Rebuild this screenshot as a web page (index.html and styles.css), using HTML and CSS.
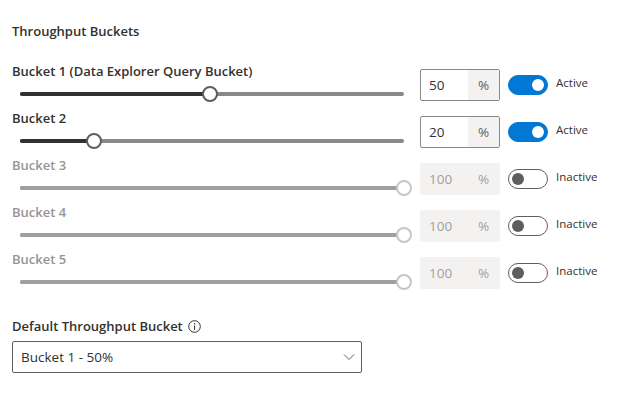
FILE: index.html
```html
<!DOCTYPE html>
<html>
<head>
<meta charset="utf-8">
<link rel="stylesheet" href="styles.css">
</head>
<body>
<div class="page">
  <div class="heading">Throughput Buckets</div>
  <div class="rows">
    <div class="row">
      <div class="left">
        <div class="label">Bucket 1 (Data Explorer Query Bucket)</div>
        <div class="slider" style="--v:50%"><div class="track"></div><div class="fill"></div><div class="thumb"></div></div>
      </div>
      <div class="field"><span class="value">50</span><span class="suffix">%</span></div>
      <div class="toggle on"><span class="knob"></span></div>
      <span class="tlabel">Active</span>
    </div>
    <div class="row">
      <div class="left">
        <div class="label">Bucket 2</div>
        <div class="slider" style="--v:20%"><div class="track"></div><div class="fill"></div><div class="thumb"></div></div>
      </div>
      <div class="field"><span class="value">20</span><span class="suffix">%</span></div>
      <div class="toggle on"><span class="knob"></span></div>
      <span class="tlabel">Active</span>
    </div>
    <div class="row disabled">
      <div class="left">
        <div class="label">Bucket 3</div>
        <div class="slider" style="--v:100%"><div class="track"></div><div class="fill"></div><div class="thumb"></div></div>
      </div>
      <div class="field"><span class="value">100</span><span class="suffix">%</span></div>
      <div class="toggle"><span class="knob"></span></div>
      <span class="tlabel">Inactive</span>
    </div>
    <div class="row disabled">
      <div class="left">
        <div class="label">Bucket 4</div>
        <div class="slider" style="--v:100%"><div class="track"></div><div class="fill"></div><div class="thumb"></div></div>
      </div>
      <div class="field"><span class="value">100</span><span class="suffix">%</span></div>
      <div class="toggle"><span class="knob"></span></div>
      <span class="tlabel">Inactive</span>
    </div>
    <div class="row disabled">
      <div class="left">
        <div class="label">Bucket 5</div>
        <div class="slider" style="--v:100%"><div class="track"></div><div class="fill"></div><div class="thumb"></div></div>
      </div>
      <div class="field"><span class="value">100</span><span class="suffix">%</span></div>
      <div class="toggle"><span class="knob"></span></div>
      <span class="tlabel">Inactive</span>
    </div>
  </div>
  <div class="default-label">Default Throughput Bucket
    <svg class="info" width="13" height="13" viewBox="0 0 13 13"><circle cx="6.5" cy="6.5" r="5.8" fill="none" stroke="#323130" stroke-width="1"/><line x1="6.5" y1="5.6" x2="6.5" y2="9.8" stroke="#323130" stroke-width="1.1"/><circle cx="6.5" cy="3.8" r="0.75" fill="#323130"/></svg>
  </div>
  <div class="dropdown">
    <span>Bucket 1 - 50%</span>
    <svg class="chev" width="12" height="8" viewBox="0 0 12 8"><polyline points="1,1.5 6,6.5 11,1.5" fill="none" stroke="#605e5c" stroke-width="1"/></svg>
  </div>
</div>
</body>
</html>
```

FILE: styles.css
```css
* { box-sizing: border-box; }
html, body { margin: 0; background: #ffffff; }
body {
  font-family: "Segoe UI", "Open Sans", "Noto Sans", sans-serif;
  color: #323130;
  font-size: 14px;
}
.page { padding: 21px 12px 0 12px; }
.heading {
  font-size: 13px;
  font-weight: 600;
  line-height: 20px;
  margin-bottom: 20px;
}
.row {
  display: grid;
  grid-template-columns: 408px 80px 48px 1fr;
  align-items: center;
  height: 47px;
}
.left { display: flex; flex-direction: column; align-self: start; }
.label {
  font-size: 13px;
  font-weight: 600;
  line-height: 20px;
  height: 20px;
  white-space: nowrap;
}
.slider {
  position: relative;
  width: 388px;
  height: 26px;
  margin-left: 4px;
}
.track, .fill {
  position: absolute;
  top: 11px;
  height: 4px;
  border-radius: 2px;
}
.track { left: 4px; right: 0; background: #8a8886; }
.fill { left: 4px; width: calc(var(--v) - 4px); background: #323130; }
.thumb {
  position: absolute;
  top: 5px;
  left: var(--v);
  width: 16px;
  height: 16px;
  margin-left: -8px;
  border-radius: 50%;
  background: #ffffff;
  border: 2px solid #605e5c;
}
.field {
  display: flex;
  height: 32px;
  border: 1px solid #8a8886;
  border-radius: 2px;
  overflow: hidden;
}
.value {
  flex: 1;
  padding-left: 8px;
  line-height: 30px;
  font-size: 13.5px;
}
.suffix {
  width: 31px;
  background: #f3f2f1;
  color: #605e5c;
  text-align: center;
  line-height: 30px;
  font-size: 13.5px;
}
.toggle {
  margin-left: 8px;
  width: 40px;
  height: 20px;
  border-radius: 10px;
  border: 1px solid #605e5c;
  background: #ffffff;
  display: flex;
  align-items: center;
  padding: 0 3px;
}
.knob {
  width: 12px;
  height: 12px;
  border-radius: 50%;
  background: #605e5c;
}
.toggle.on {
  background: #0078d4;
  border-color: #0078d4;
  justify-content: flex-end;
}
.toggle.on .knob { background: #ffffff; }
.tlabel {
  padding-left: 8px;
  font-size: 11.5px;
  line-height: 16px;
  margin-top: -3px;
}
.disabled .label { color: #979593; }
.disabled .track, .disabled .fill { background: #a19f9d; }
.disabled .thumb { border-color: #c8c6c4; }
.disabled .field { border-color: #f3f2f1; background: #f3f2f1; }
.disabled .value, .disabled .suffix { color: #a19f9d; }
.default-label {
  margin-top: 15px;
  padding: 5px 0;
  font-size: 13px;
  font-weight: 600;
  line-height: 20px;
  display: flex;
  align-items: center;
  gap: 5px;
}
.info { display: block; margin-top: 1px; }
.dropdown {
  width: 350px;
  height: 32px;
  border: 1px solid #605e5c;
  border-radius: 2px;
  display: flex;
  align-items: center;
  justify-content: space-between;
  padding: 0 6px 0 8px;
  font-size: 13.5px;
}
.chev { display: block; }
```
